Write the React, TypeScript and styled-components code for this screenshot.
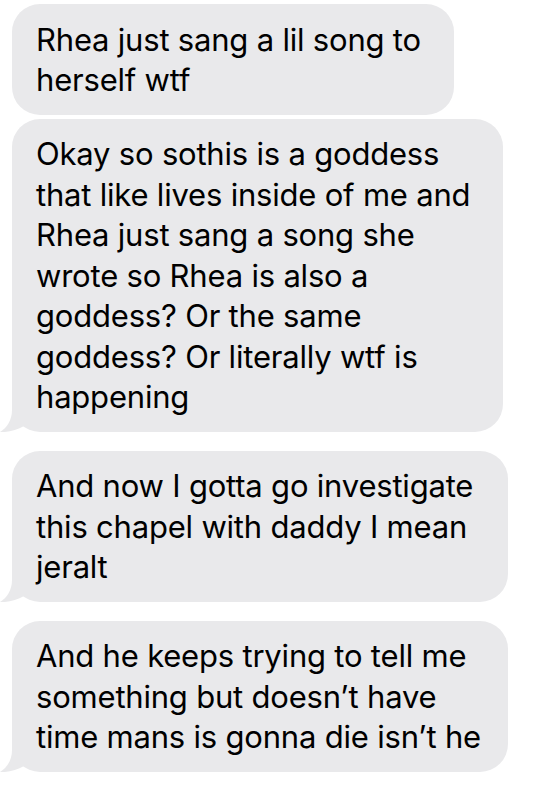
import React from "react";
import styled, { createGlobalStyle } from "styled-components";

const GlobalStyle = createGlobalStyle`
  html, body {
    margin: 0;
    padding: 0;
    background: #ffffff;
  }
  body {
    font-family: Inter, "Noto Sans", "Liberation Sans", sans-serif;
    -webkit-font-smoothing: antialiased;
  }
`;

const Thread = styled.div`
  display: flex;
  flex-direction: column;
  gap: 19px;
  padding: 4px 0 16px 12px;
  width: 544px;
  box-sizing: border-box;
`;

const Group = styled.div`
  display: flex;
  flex-direction: column;
  gap: 4px;
`;

const BubbleBox = styled.div<{ $w: number }>`
  position: relative;
  width: ${(p) => p.$w}px;
  box-sizing: border-box;
  background: #e9e9eb;
  border-radius: 28px;
  padding: 15.5px 0 14px 24px;
  color: #000000;
  font-family: Inter, "Noto Sans", "Liberation Sans", sans-serif;
  font-size: 31px;
  line-height: 40.5px;
  letter-spacing: -0.2px;
`;

const Line = styled.div`
  position: relative;
  z-index: 1;
  white-space: nowrap;
`;

const Tail = styled.svg`
  position: absolute;
  z-index: 0;
  left: -12px;
  bottom: 0;
  width: 40px;
  height: 32px;
  display: block;
`;

function Bubble({ w, tail, lines }: { w: number; tail?: boolean; lines: string[] }) {
  return (
    <BubbleBox $w={w}>
      {tail && (
        <Tail viewBox="0 0 40 32" aria-hidden="true">
          <path
            d="M12 0 L12 10 C12 20 7 28 0 32 C8 32.6 17 30 24 26 L40 26 L40 0 Z"
            fill="#e9e9eb"
          />
        </Tail>
      )}
      {lines.map((l, i) => (
        <Line key={i}>{l}</Line>
      ))}
    </BubbleBox>
  );
}

export default function App() {
  return (
    <>
      <GlobalStyle />
      <Thread>
        <Group>
          <Bubble w={442} lines={["Rhea just sang a lil song to", "herself wtf"]} />
          <Bubble
            w={491}
            tail
            lines={[
              "Okay so sothis is a goddess",
              "that like lives inside of me and",
              "Rhea just sang a song she",
              "wrote so Rhea is also a",
              "goddess? Or the same",
              "goddess? Or literally wtf is",
              "happening",
            ]}
          />
        </Group>
        <Bubble
          w={496}
          tail
          lines={["And now I gotta go investigate", "this chapel with daddy I mean", "jeralt"]}
        />
        <Bubble
          w={496}
          tail
          lines={[
            "And he keeps trying to tell me",
            "something but doesn\u2019t have",
            "time mans is gonna die isn\u2019t he",
          ]}
        />
      </Thread>
    </>
  );
}
